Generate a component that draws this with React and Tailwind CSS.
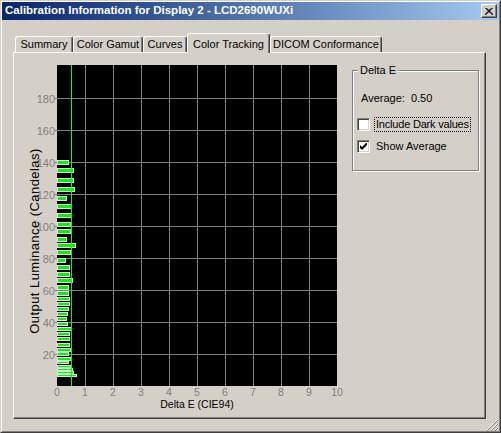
import React from 'react';

const bars = [
  [160, 5, 69], [168, 5, 74], [178, 5, 74], [187, 5, 75], [196, 5, 67], [204, 5, 72], [213, 5, 72], [222, 5, 71],
  [229, 5, 71], [237, 5, 67], [243, 5, 76], [250, 5, 71], [258, 5, 66], [265, 5, 70], [272, 5, 70], [278, 5, 73],
  [285, 5, 69], [291, 5, 69], [297, 4, 70], [302, 4, 70], [307, 4, 69], [312, 4, 68], [317, 4, 67], [322, 4, 68],
  [327, 4, 72], [332, 4, 70], [337, 4, 70], [343, 4, 70], [348, 4, 71], [352, 4, 69], [357, 4, 71], [361, 3, 69],
  [365, 3, 71], [368, 3, 73], [371, 3, 74], [374, 3, 77],
];

const tabs = [
  { label: 'Summary', w: 'w-[58px]' },
  { label: 'Color Gamut', w: 'w-[70px]' },
  { label: 'Curves', w: 'w-[44px]' },
  { label: 'Color Tracking', w: 'w-[83px]', active: true },
  { label: 'DICOM Conformance', w: 'w-[112px]' },
];

function CheckBox({ checked }) {
  return (
    <span className="w-[13px] h-[13px] shrink-0 bg-white border border-t-[#808080] border-l-[#808080] border-r-white border-b-white shadow-[inset_1px_1px_0_#404040,inset_-1px_-1px_0_#d4d0c8] flex items-center justify-center">
      {checked && (
        <svg width="7" height="7" viewBox="0 0 7 7">
          <path d="M0 2 L2 4 L7 -1 L7 2 L2 7 L0 5 Z" fill="black" />
        </svg>
      )}
    </span>
  );
}

function Chart() {
  const xs = [0, 1, 2, 3, 4, 5, 6, 7, 8, 9, 10];
  const ys = [20, 40, 60, 80, 100, 120, 140, 160, 180];
  return (
    <svg width="338" height="362" viewBox="14 53 338 362" className="block shrink-0" fontFamily="'Liberation Sans', Arial, sans-serif">
      <rect x="57" y="65" width="280" height="321" fill="black" />
      {xs.slice(1, 10).map((v) => (
        <line key={'gx' + v} x1={57 + v * 28 + 0.5} y1="65" x2={57 + v * 28 + 0.5} y2="386" stroke="#808080" />
      ))}
      {ys.map((v) => (
        <line key={'gy' + v} x1="57" y1={386 - v * 1.6 + 0.5} x2="337" y2={386 - v * 1.6 + 0.5} stroke="#808080" />
      ))}
      {bars.map(([y, h, x2], i) => (
        <rect key={i} x="57.5" y={y + 0.5} width={x2 - 58} height={h - 1} fill="#1ee01e" stroke="#c8f8c8" />
      ))}
      <line x1="71.5" y1="65" x2="71.5" y2="386" stroke="#00ff00" />
      {ys.map((v) => (
        <g key={'ty' + v}>
          <line x1="55" y1={386 - v * 1.6 + 0.5} x2="57" y2={386 - v * 1.6 + 0.5} stroke="#808080" />
          <text x="55" y={386 - v * 1.6 + 4.5} textAnchor="end" fontSize="11" fill="#808080">{v}</text>
        </g>
      ))}
      {xs.map((v) => (
        <text key={'tx' + v} x={57 + v * 28} y="396" textAnchor="middle" fontSize="10.5" fill="#808080">{v}</text>
      ))}
      <text x="197" y="408" textAnchor="middle" fontSize="10.5" fill="black">Delta E (CIE94)</text>
      <text transform="translate(39 241) rotate(-90)" textAnchor="middle" fontSize="13" fill="black" letterSpacing="0.45">
        Output Luminance (Candelas)
      </text>
    </svg>
  );
}

export default function App() {
  return (
    <div className="w-[501px] h-[433px] bg-[#d4d0c8] border border-t-[#d4d0c8] border-l-[#d4d0c8] border-r-[#404040] border-b-[#404040] font-['Liberation_Sans',Arial,sans-serif] text-[11px] text-black overflow-hidden select-none">
      <div className="h-full flex flex-col border border-t-white border-l-white border-r-[#808080] border-b-[#808080]">
        {/* title bar */}
        <div className="h-[18px] shrink-0 flex items-center pl-[3px] pr-[2px] bg-gradient-to-r from-[#0a246a] to-[#a6caf0]">
          <span className="flex-1 font-bold text-white text-[11.5px] leading-none whitespace-nowrap">
            Calibration Information for Display 2 - LCD2690WUXi
          </span>
          <button className="w-[16px] h-[14px] flex items-center justify-center bg-[#d4d0c8] border border-t-white border-l-white border-r-[#404040] border-b-[#404040] shadow-[inset_-1px_-1px_0_#808080]">
            <svg width="8" height="7" viewBox="0 0 8 7">
              <path d="M0.5 0 L7.5 7 M1.5 0 L8.5 7 M7.5 0 L0.5 7 M6.5 0 L-0.5 7" stroke="black" strokeWidth="1" />
            </svg>
          </button>
        </div>

        {/* tabs */}
        <div className="mt-[13px] ml-[11px] w-[473px]">
          <div className="h-[19px] flex items-end pl-[2px] relative z-10">
            {tabs.map((t) =>
              t.active ? (
                <div
                  key={t.label}
                  className={`${t.w} h-[20px] -mb-px bg-[#d4d0c8] border-l border-t border-r border-l-white border-t-white border-r-[#404040] rounded-t-[3px] shadow-[inset_-1px_0_0_#808080] flex items-start justify-center pt-[2px]`}
                >
                  {t.label}
                </div>
              ) : (
                <div
                  key={t.label}
                  className={`${t.w} h-[16px] bg-[#d4d0c8] border-l border-t border-r border-l-white border-t-white border-r-[#404040] rounded-t-[3px] shadow-[inset_-1px_0_0_#808080] flex items-center justify-center`}
                >
                  {t.label}
                </div>
              )
            )}
          </div>

          {/* tab panel */}
          <div className="h-[367px] flex border border-t-white border-l-white border-r-[#404040] border-b-[#404040] shadow-[inset_-1px_-1px_0_#808080]">
            <Chart />
            <fieldset className="mt-[11px] w-[127px] h-[107px] border border-[#808080] shadow-[1px_1px_0_white,inset_1px_1px_0_white]">
              <legend className="ml-[5px] px-[2px] bg-[#d4d0c8] leading-[13px]">Delta E</legend>
              <div className="mt-[15px] pl-[8px] leading-[13px] whitespace-pre">Average:  0.50</div>
              <div className="mt-[12px] pl-[4px] h-[15px] flex items-center">
                <CheckBox />
                <span className="ml-[4px] px-[1px] border border-dotted border-black leading-[13px] whitespace-nowrap tracking-[-0.2px]">Include Dark values</span>
              </div>
              <div className="mt-[7px] pl-[4px] h-[15px] flex items-center">
                <CheckBox checked />
                <span className="ml-[6px] leading-[13px] whitespace-nowrap">Show Average</span>
              </div>
            </fieldset>
          </div>
        </div>

        {/* size grip */}
        <div className="flex-1 flex justify-end items-end pr-[1px] pb-[1px]">
          <svg width="12" height="12" viewBox="0 0 12 12">
            <path d="M11 1 L1 11 M11 5 L5 11 M11 9 L9 11" stroke="white" strokeWidth="1" />
            <path d="M12 1 L1 12 M12 5 L5 12 M12 9 L9 12" stroke="#808080" strokeWidth="1" />
          </svg>
        </div>
      </div>
    </div>
  );
}
